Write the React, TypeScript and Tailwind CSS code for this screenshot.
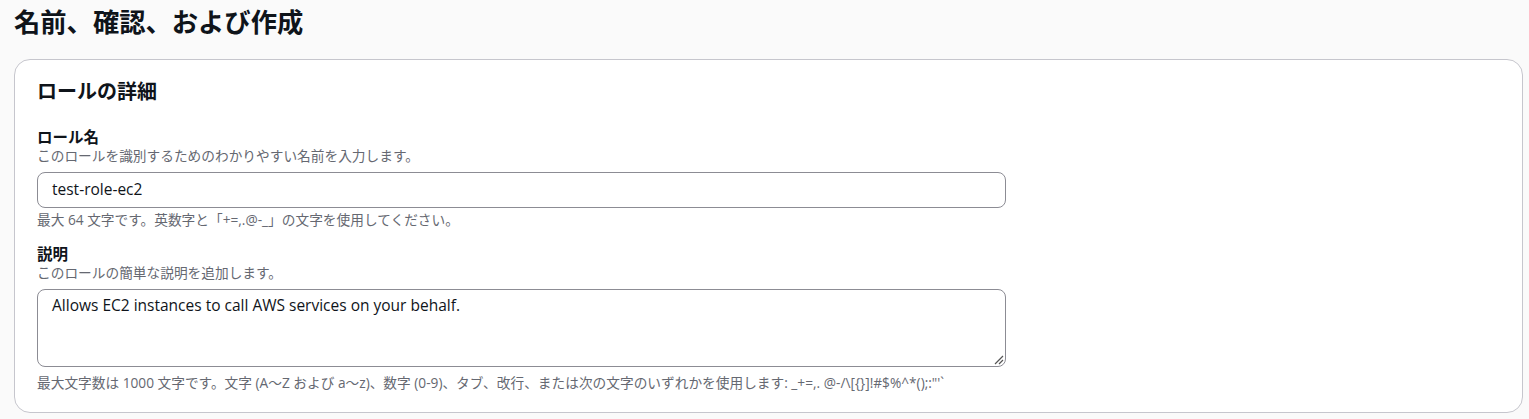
import React from "react";

const font = { fontFamily: '"Open Sans", "Noto Sans CJK JP", sans-serif' };

const symbols = "_+=,. @-/\\[{}]!#$%^*();:\"'`";

export default function App() {
  return (
    <div
      className="min-h-[419px] w-full bg-[#fafafa] px-[14px] pt-[6px] pb-[6px] text-[#000716]"
      style={font}
    >
      <h1 className="text-[26.3px] leading-[32px] font-bold text-[#0f141a]">
        名前、確認、および作成
      </h1>
      <div className="mt-[21px] w-[1509px] rounded-[16px] border border-[#c6c6cd] bg-white px-[22px] pt-[18px] pb-[20px]">
        <h2 className="text-[20px] leading-[28px] font-bold text-[#0f141a]">ロールの詳細</h2>

        <div className="mt-[21px]">
          <div className="text-[15.5px] leading-[20px] font-bold text-[#0f141a]">ロール名</div>
          <div className="text-[13.7px] leading-[18px] text-[#656871]">
            このロールを識別するためのわかりやすい名前を入力します。
          </div>
          <div className="mt-[7px] flex h-[36px] w-[969px] items-center rounded-[8px] border border-[#8c8c94] px-[14px] text-[15.5px] text-[#0f141a]">
            test-role-ec2
          </div>
          <div className="mt-[3px] text-[13.7px] leading-[18px] text-[#656871]">
            最大 64 文字です。英数字と「+=,.@-_」の文字を使用してください。
          </div>
        </div>

        <div className="mt-[15px]">
          <div className="text-[15.5px] leading-[20px] font-bold text-[#0f141a]">説明</div>
          <div className="text-[13.7px] leading-[18px] text-[#656871]">
            このロールの簡単な説明を追加します。
          </div>
          <div className="relative mt-[7px] h-[78px] w-[969px] rounded-[8px] border border-[#8c8c94] px-[14px] pt-[5px] text-[15.5px] leading-[20px] text-[#0f141a]">
            Allows EC2 instances to call AWS services on your behalf.
            <svg
              className="absolute right-[1px] bottom-[1px]"
              width="11"
              height="11"
              viewBox="0 0 11 11"
            >
              <path d="M10 2 L2 10 M10 6 L6 10" stroke="#555" strokeWidth="1.2" />
            </svg>
          </div>
          <div className="mt-[7px] text-[13.7px] leading-[18px] text-[#656871]">
            最大文字数は 1000 文字です。文字 (A〜Z および a〜z)、数字 (0-9)、タブ、改行、または次の文字のいずれかを使用します: {symbols}
          </div>
        </div>
      </div>
    </div>
  );
}
